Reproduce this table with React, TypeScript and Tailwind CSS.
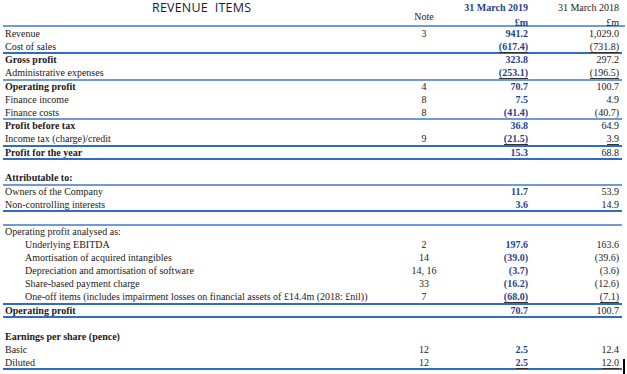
import React from 'react';

type Row = {
  label: string;
  note?: string;
  cur?: string;
  prev?: string;
  bold?: boolean;
  indent?: boolean;
  uline?: boolean;
  cursor?: boolean;
};

type Block =
  | { kind: 'row'; row: Row }
  | { kind: 'line'; tone: 'light' | 'dark'; flat?: boolean }
  | { kind: 'gap'; h: string };

const r = (row: Row): Block => ({ kind: 'row', row });
const light: Block = { kind: 'line', tone: 'light' };
const dark: Block = { kind: 'line', tone: 'dark' };

const blocks: Block[] = [
  r({ label: 'Revenue', note: '3', cur: '941.2', prev: '1,029.0' }),
  r({ label: 'Cost of sales', cur: '(617.4)', prev: '(731.8)', uline: true }),
  dark,
  r({ label: 'Gross profit', cur: '323.8', prev: '297.2', bold: true }),
  r({ label: 'Administrative expenses', cur: '(253.1)', prev: '(196.5)', uline: true }),
  light,
  r({ label: 'Operating profit', note: '4', cur: '70.7', prev: '100.7', bold: true }),
  r({ label: 'Finance income', note: '8', cur: '7.5', prev: '4.9' }),
  r({ label: 'Finance costs', note: '8', cur: '(41.4)', prev: '(40.7)' }),
  light,
  r({ label: 'Profit before tax', cur: '36.8', prev: '64.9', bold: true }),
  r({ label: 'Income tax (charge)/credit', note: '9', cur: '(21.5)', prev: '3.9', uline: true }),
  dark,
  r({ label: 'Profit for the year', cur: '15.3', prev: '68.8', bold: true }),
  dark,
  { kind: 'gap', h: 'h-[12px]' },
  r({ label: 'Attributable to:', bold: true }),
  light,
  r({ label: 'Owners of the Company', cur: '11.7', prev: '53.9' }),
  r({ label: 'Non-controlling interests', cur: '3.6', prev: '14.9' }),
  dark,
  { kind: 'gap', h: 'h-[12px]' },
  { kind: 'line', tone: 'light', flat: true },
  r({ label: 'Operating profit analysed as:' }),
  r({ label: 'Underlying EBITDA', note: '2', cur: '197.6', prev: '163.6', indent: true }),
  r({ label: 'Amortisation of acquired intangibles', note: '14', cur: '(39.0)', prev: '(39.6)', indent: true }),
  r({ label: 'Depreciation and amortisation of software', note: '14, 16', cur: '(3.7)', prev: '(3.6)', indent: true }),
  r({ label: 'Share-based payment charge', note: '33', cur: '(16.2)', prev: '(12.6)', indent: true }),
  r({
    label: 'One-off items (includes impairment losses on financial assets of £14.4m (2018: £nil))',
    note: '7',
    cur: '(68.0)',
    prev: '(7.1)',
    indent: true,
    uline: true,
  }),
  dark,
  r({ label: 'Operating profit', cur: '70.7', prev: '100.7', bold: true }),
  dark,
  { kind: 'gap', h: 'h-[12.5px]' },
  r({ label: 'Earnings per share (pence)', bold: true }),
  r({ label: 'Basic', note: '12', cur: '2.5', prev: '12.4' }),
  r({ label: 'Diluted', note: '12', cur: '2.5', prev: '12.0', uline: true, cursor: true }),
  dark,
];

function TableRow({ row }: { row: Row }) {
  const u = row.uline ? 'border-b border-[#333]' : '';
  return (
    <div className="flex h-[13px] items-center leading-none">
      <div className={`w-[390px] whitespace-nowrap ${row.indent ? 'pl-[20px]' : ''} ${row.bold ? 'font-bold' : ''}`}>
        {row.label}
      </div>
      <div className="w-[58px] text-center">{row.note}</div>
      <div className="w-[75px] text-right">
        <span className={`font-bold text-[#1f3f92] ${u}`}>{row.cur}</span>
      </div>
      <div className="relative w-[91px] text-right">
        <span className={u}>{row.prev}</span>
        {row.cursor && <span className="absolute right-[-6px] top-[1px] h-[15px] w-[2px] bg-black" />}
      </div>
    </div>
  );
}

export default function App() {
  return (
    <div className="h-[374px] w-[627px] overflow-hidden bg-white text-[#1e1a22]">
      <div className="flex h-[25px] text-[10px] leading-none" style={{ fontFamily: '"Liberation Serif", serif' }}>
        <div
          className="w-[395px] pl-[152px] pt-px text-[12.5px] leading-[13px] tracking-[0.2px]"
          style={{ fontFamily: '"Open Sans", sans-serif' }}
        >
          REVENUE&nbsp; ITEMS
        </div>
        <div className="w-[58px] pt-[12px] text-center">Note</div>
        <div className="flex w-[75px] flex-col items-end gap-[5px] pt-[3px] font-bold text-[#1f3f92]">
          <span>31 March 2019</span>
          <span>£m</span>
        </div>
        <div className="flex w-[91px] flex-col items-end gap-[5px] pt-[3px]">
          <span>31 March 2018</span>
          <span>£m</span>
        </div>
      </div>
      <div className="ml-[3px] h-[2px] w-[622px] bg-[#6f9ad6]" />
      <div className="w-[622px] pl-[5px] text-[10px]" style={{ fontFamily: '"Liberation Serif", serif' }}>
        {blocks.map((b, i) => {
          if (b.kind === 'line')
            return (
              <div
                key={i}
                className={`-ml-[2px] h-[2px] ${b.flat ? '' : '-mt-px -mb-[0.5px]'} ${
                  b.tone === 'light' ? 'bg-[#6f9ad6]' : 'bg-[#2f6cc4]'
                }`}
              />
            );
          if (b.kind === 'gap') return <div key={i} className={b.h} />;
          return <TableRow key={i} row={b.row} />;
        })}
      </div>
    </div>
  );
}
